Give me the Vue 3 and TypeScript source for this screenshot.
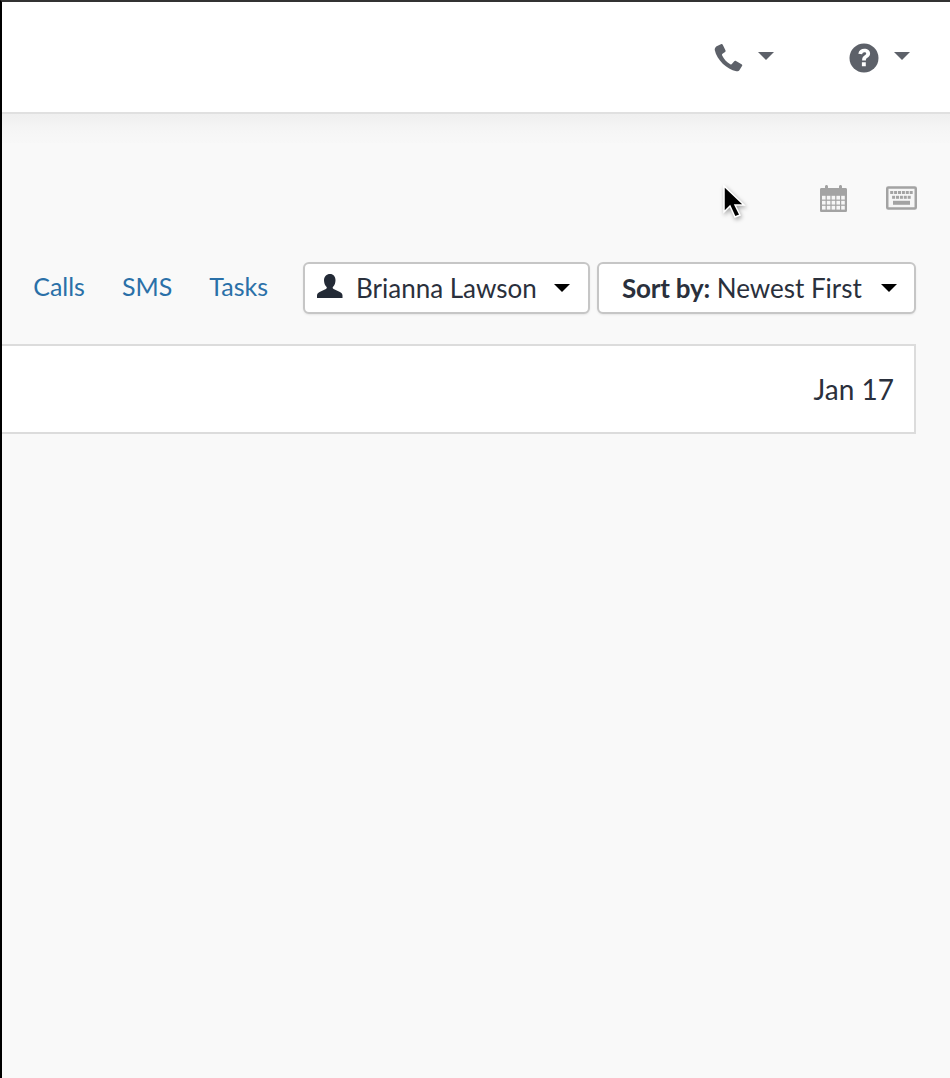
<script setup lang="ts">
const links: string[] = ['Calls', 'SMS', 'Tasks']
const calCols: number[] = [0, 1, 2, 3, 4]
const calRows: number[] = [0, 1, 2]
</script>

<template>
  <div class="page">
    <header class="topbar">
      <button class="top-btn phone">
        <svg width="29" height="29" viewBox="2.500 1.400 24.500 25"><path d="M5 3.200 8.200 1.600c.7-.3 1.300-.1 1.600.5l2.300 4.600c.3.600.2 1.100-.3 1.500L9.600 9.800c-.5.400-.6.900-.3 1.500 1.400 3.100 3.900 5.800 7 7.500.6.300 1.100.2 1.500-.3l1.900-2.200c.4-.5 1-.6 1.500-.3l4.800 2.800c.6.300.8 1 .4 1.600l-2 3.200c-.6 1-1.700 1.500-2.900 1.300C13.300 23.300 4.700 15 2.900 6.500 2.700 5.200 3.700 3.800 5 3.200Z" fill="#5d6169"/></svg>
        <span class="caret grey"></span>
      </button>
      <button class="top-btn help">
        <svg width="30" height="30" viewBox="0 0 30 30"><circle cx="15" cy="15" r="14.500" fill="#5d6169"/><path d="M9.300 10.800C9.900 7.400 12.200 5.800 15.300 5.800c3.300 0 5.800 1.900 5.800 4.800 0 2.200-1.200 3.200-2.700 4.200-1.300.8-1.500 1.300-1.500 2.700h-3.800c0-2.600.6-3.800 2.400-5 1.100-.7 1.700-1.200 1.700-1.900 0-.9-.8-1.400-1.800-1.400-1.200 0-2 .7-2.300 2.100ZM12.900 19.200h3.900v4.100h-3.900Z" fill="#fff"/></svg>
        <span class="caret grey"></span>
      </button>
    </header>
    <div class="shade"></div>
    <main class="content">
      <div class="icon-row">
        <svg class="cursor" width="32" height="42" viewBox="0 0 32 42"><path d="M4 3v26l6-6 5 11 5-2-5-10h9Z" fill="#000" stroke="#fff" stroke-width="1.500"/></svg>
        <svg class="calendar" width="27" height="28" viewBox="0 0 27 28">
          <path d="M0 5.500C0 4.500.6 4 1.500 4H5V2.500C5 .5 8 .5 8 2.500V4h11V2.500c0-2 3-2 3 0V4h3.500c.9 0 1.500.5 1.500 1.500V10H0Z" fill="#a3a3a3"/>
          <path d="M0 10h27v16.500c0 1-.6 1.500-1.500 1.500h-24C.6 28 0 27.500 0 26.500Z" fill="#a3a3a3"/>
          <template v-for="row in calRows" :key="row">
            <rect v-for="col in calCols" :key="col" :x="2 + col * 4.800" :y="11.800 + row * 5" width="3.600" height="3.800" fill="#f6f6f6"/>
          </template>
        </svg>
        <svg class="keyboard" width="31" height="24" viewBox="0 0 31 24">
          <rect x="1.250" y="1.500" width="28.500" height="21" rx="1" fill="#f6f6f6" stroke="#a3a3a3" stroke-width="2.500"/>
          <g fill="#a3a3a3">
            <rect v-for="k in 6" :key="'a' + k" :x="4.200 + (k - 1) * 3.900" y="5" width="3" height="3"/>
            <rect v-for="k in 5" :key="'b' + k" :x="6.100 + (k - 1) * 3.900" y="9.800" width="3" height="3"/>
            <rect x="7" y="14.800" width="17" height="4"/>
          </g>
        </svg>
      </div>
      <div class="filter-row">
        <nav class="links">
          <a v-for="l in links" :key="l" class="link">{{ l }}</a>
        </nav>
        <div class="dropdowns">
          <button class="select user">
            <svg width="26" height="24" viewBox="0 0 26 24"><path d="M13 0c3.400 0 5.500 2.600 5.500 6.200 0 2.500-.9 5-2.400 6.600-.7.800-.5 1.700.5 2.200l6.300 3c1.700.8 2.600 2 2.600 3.500V24H0v-2.500c0-1.500.9-2.700 2.600-3.500l6.300-3c1-.5 1.200-1.400.5-2.200-1.500-1.600-2.400-4.100-2.400-6.600C7 2.600 9.600 0 13 0Z" fill="#232a36"/></svg>
            <span class="label">Brianna Lawson</span>
            <span class="caret black"></span>
          </button>
          <button class="select sort">
            <span class="label"><b>Sort by:</b> Newest First</span>
            <span class="caret black"></span>
          </button>
        </div>
      </div>
      <section class="card">
        <span>Jan 17</span>
      </section>
    </main>
  </div>
</template>

<style>
html, body { margin: 0; background: #f9f9f9; }
</style>

<style scoped>
.page {
  box-sizing: border-box;
  width: 950px;
  height: 1078px;
  border-left: 2px solid #000;
  border-top: 2px solid #333;
  background: #f9f9f9;
  display: flex;
  flex-direction: column;
  font-family: Lato, "Open Sans", sans-serif;
  color: #2a303c;
  overflow: hidden;
}
button { font: inherit; color: inherit; margin: 0; }
.topbar {
  box-sizing: border-box;
  height: 112px;
  background: #fff;
  border-bottom: 2px solid #e0e0e0;
  display: flex;
  justify-content: flex-end;
  align-items: flex-start;
  padding: 41px 40px 0 0;
  flex: none;
}
.top-btn {
  background: none;
  border: 0;
  padding: 0;
  display: flex;
  align-items: flex-start;
  gap: 15px;
}
.phone { margin-right: 75px; }
.phone svg { margin-top: 1px; }
.help { gap: 15px; }
.caret {
  display: block;
  width: 0;
  height: 0;
  border-style: solid;
  border-color: transparent;
  border-width: 8px 8px 0;
}
.caret.grey { border-top-color: #5d6169; margin-top: 9px; }
.caret.black { border-top-color: #000; }
.shade {
  height: 29px;
  flex: none;
  background: linear-gradient(#efefef, #f5f5f5 50%, #f8f8f8);
}
.content {
  flex: 1;
  padding-right: 34px;
  display: flex;
  flex-direction: column;
}
.icon-row {
  display: flex;
  justify-content: flex-end;
  align-items: flex-start;
  height: 119px;
  box-sizing: border-box;
  padding: 41px 0 0;
  position: relative;
  margin-right: -1px;
}
.cursor { position: absolute; left: 718px; top: 40px; filter: drop-shadow(1px 2px 2px rgba(0,0,0,.35)); }
.calendar { margin-right: 39px; }
.keyboard { margin-top: 2px; }
.filter-row {
  display: flex;
  justify-content: flex-end;
  align-items: center;
  height: 52px;
}
.links { display: flex; gap: 37px; margin-right: 35px; }
.link { color: #2a70a8; font-size: 25px; line-height: 30px; margin-top: -4px; }
.dropdowns { display: flex; gap: 7px; }
.select {
  box-sizing: border-box;
  height: 52px;
  background: #fff;
  border: 2px solid #c6c6c6;
  border-radius: 6px;
  display: flex;
  align-items: center;
  font-size: 26px;
  box-shadow: 0 1px 2px rgba(0,0,0,.08);
}
.user { width: 287px; padding: 0 18px 0 12px; }
.user svg { margin-right: 13px; margin-top: -4px; }
.sort { width: 319px; padding: 0 17px 0 23px; }
.select .label { flex: 1; text-align: left; white-space: nowrap; }
.select b { font-weight: 700; letter-spacing: -0.2px; }
.card {
  box-sizing: border-box;
  margin-top: 30px;
  height: 90px;
  background: #fff;
  border: 2px solid #dcdcdc;
  border-left: 0;
  display: flex;
  justify-content: flex-end;
  align-items: center;
  padding-right: 20px;
  font-size: 28px;
}
</style>
